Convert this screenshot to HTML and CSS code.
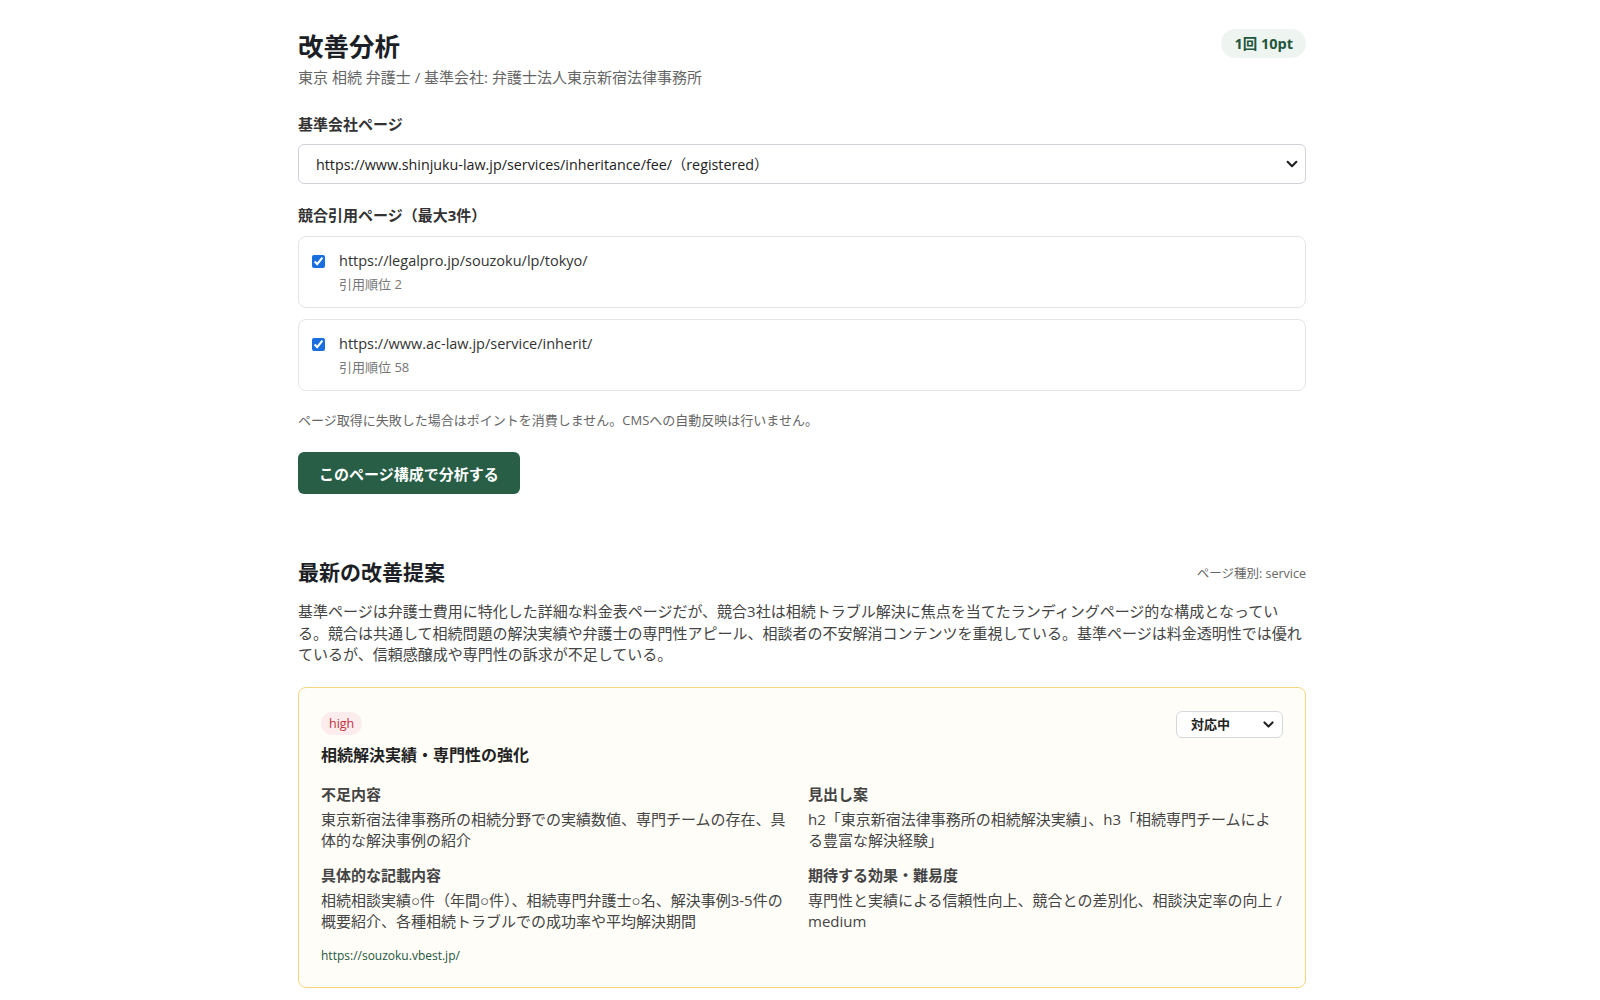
FILE: index.html
```html
<!DOCTYPE html>
<html lang="ja">
<head>
  <meta charset="UTF-8">
  <meta name="viewport" content="width=device-width, initial-scale=1.0">
  <title>改善分析</title>
  <link rel="stylesheet" href="styles.css">
</head>
<body>
  <div class="page">
    <div class="page-header">
      <div>
        <h1 class="page-title">改善分析</h1>
        <div class="page-sub">東京 相続 弁護士 / 基準会社: 弁護士法人東京新宿法律事務所</div>
      </div>
      <span class="cost-badge">1回 10pt</span>
    </div>

    <div class="field">
      <div class="field-label">基準会社ページ</div>
      <div class="select-wrap">
        <select class="select">
          <option>https://www.shinjuku-law.jp/services/inheritance/fee/（registered）</option>
        </select>
        <svg class="select-arrow" width="14" height="14" viewBox="0 0 16 16"><path d="M3 5.5l5 5 5-5" fill="none" stroke="#222" stroke-width="2.4" stroke-linecap="round" stroke-linejoin="round"/></svg>
      </div>
    </div>

    <div class="field field-comp">
      <div class="field-label">競合引用ページ（最大3件）</div>
      <div class="competitors">
        <label class="comp-card">
          <input type="checkbox" class="comp-check" checked>
          <div>
            <div class="comp-url">https://legalpro.jp/souzoku/lp/tokyo/</div>
            <div class="comp-rank">引用順位 2</div>
          </div>
        </label>
        <label class="comp-card">
          <input type="checkbox" class="comp-check" checked>
          <div>
            <div class="comp-url">https://www.ac-law.jp/service/inherit/</div>
            <div class="comp-rank">引用順位 58</div>
          </div>
        </label>
      </div>
    </div>

    <p class="note">ページ取得に失敗した場合はポイントを消費しません。CMSへの自動反映は行いません。</p>
    <button class="run-btn">このページ構成で分析する</button>

    <div class="result">
      <div class="result-head">
        <h2 class="result-title">最新の改善提案</h2>
        <span class="page-type">ページ種別: service</span>
      </div>
      <p class="summary">基準ページは弁護士費用に特化した詳細な料金表ページだが、競合3社は相続トラブル解決に焦点を当てたランディングページ的な構成となっている。競合は共通して相続問題の解決実績や弁護士の専門性アピール、相談者の不安解消コンテンツを重視している。基準ページは料金透明性では優れているが、信頼感醸成や専門性の訴求が不足している。</p>

      <div class="suggestion">
        <div class="sug-top">
          <div>
            <span class="priority">high</span>
            <div class="sug-title">相続解決実績・専門性の強化</div>
          </div>
          <div class="status-wrap">
            <select class="status-select">
              <option>対応中</option>
            </select>
            <svg class="status-arrow" width="13" height="13" viewBox="0 0 16 16"><path d="M3 5.5l5 5 5-5" fill="none" stroke="#222" stroke-width="2.6" stroke-linecap="round" stroke-linejoin="round"/></svg>
          </div>
        </div>
        <div class="sug-grid">
          <div class="sug-item">
            <div class="sug-label">不足内容</div>
            <div class="sug-text">東京新宿法律事務所の相続分野での実績数値、専門チームの存在、具体的な解決事例の紹介</div>
          </div>
          <div class="sug-item">
            <div class="sug-label">見出し案</div>
            <div class="sug-text">h2「東京新宿法律事務所の相続解決実績」、h3「相続専門チームによる豊富な解決経験」</div>
          </div>
          <div class="sug-item">
            <div class="sug-label">具体的な記載内容</div>
            <div class="sug-text">相続相談実績○件（年間○件）、相続専門弁護士○名、解決事例3-5件の概要紹介、各種相続トラブルでの成功率や平均解決期間</div>
          </div>
          <div class="sug-item">
            <div class="sug-label">期待する効果・難易度</div>
            <div class="sug-text">専門性と実績による信頼性向上、競合との差別化、相談決定率の向上 / medium</div>
          </div>
        </div>
        <a href="#" class="sug-link">https://souzoku.vbest.jp/</a>
      </div>
    </div>
  </div>
</body>
</html>
```

FILE: styles.css
```css
* {
  margin: 0;
  padding: 0;
  box-sizing: border-box;
}

body {
  font-family: "Open Sans", "Liberation Sans", "Noto Sans CJK JP", sans-serif;
  background: #fff;
  color: #222;
  padding-left: 4px;
}

.page {
  width: 1008px;
  margin: 0 auto;
  padding-top: 28px;
}

.page-header {
  display: flex;
  justify-content: space-between;
  align-items: flex-start;
}

.page-title {
  font-size: 25.5px;
  font-weight: 700;
  color: #1c1f26;
  line-height: 36px;
}

.page-sub {
  font-size: 15px;
  line-height: 21px;
  color: #666;
  margin-top: 3px;
}

.cost-badge {
  margin-top: 1px;
  background: #eef5f0;
  color: #23563d;
  font-size: 14.5px;
  line-height: 19px;
  font-weight: 700;
  padding: 5px 13px;
  border-radius: 15px;
}

.field {
  margin-top: 26px;
}

.field-comp {
  margin-top: 21px;
}

.field-label {
  font-size: 15px;
  line-height: 21px;
  font-weight: 700;
  color: #333;
  margin-bottom: 9px;
}

.field-comp .field-label {
  margin-bottom: 10px;
}

.select-wrap {
  position: relative;
}

.select {
  width: 100%;
  height: 40px;
  appearance: none;
  border: 1px solid #cfd3d8;
  border-radius: 6px;
  background: #fff;
  padding: 0 36px 0 17px;
  font-family: inherit;
  font-size: 14.3px;
  color: #222;
}

.select-arrow {
  position: absolute;
  right: 7px;
  top: 13px;
  pointer-events: none;
}

.competitors {
  display: flex;
  flex-direction: column;
  gap: 11px;
}

.comp-card {
  display: flex;
  align-items: flex-start;
  gap: 14px;
  border: 1px solid #e3e5e8;
  border-radius: 8px;
  padding: 14px 13px 13px;
  height: 72px;
}

.comp-check {
  width: 13px;
  height: 13px;
  margin-top: 4px;
  accent-color: #1a6fe0;
}

.comp-url {
  font-size: 14.5px;
  color: #333;
  line-height: 20px;
}

.comp-rank {
  font-size: 13px;
  line-height: 18px;
  color: #777;
  margin-top: 4px;
}

.note {
  font-size: 13px;
  line-height: 18px;
  color: #666;
  margin-top: 20px;
}

.run-btn {
  margin-top: 23px;
  background: #275e45;
  color: #fff;
  border: none;
  border-radius: 6px;
  font-family: inherit;
  font-size: 15px;
  font-weight: 700;
  height: 42px;
  padding: 0 21px;
  cursor: pointer;
}

.result {
  margin-top: 63px;
}

.result-head {
  display: flex;
  justify-content: space-between;
  align-items: center;
}

.result-title {
  font-size: 21px;
  line-height: 30px;
  font-weight: 700;
  color: #1c1f26;
}

.page-type {
  font-size: 12.5px;
  color: #666;
}

.summary {
  margin-top: 14px;
  font-size: 15px;
  line-height: 21.5px;
  color: #444;
}

.suggestion {
  margin-top: 21px;
  border: 1px solid #f6d77e;
  background: #fffdf8;
  border-radius: 8px;
  padding: 23px 22px 22px;
}

.sug-top {
  display: flex;
  justify-content: space-between;
  align-items: flex-start;
}

.priority {
  display: inline-block;
  background: #fdecee;
  color: #c0303a;
  font-size: 12.5px;
  line-height: 17px;
  padding: 3px 8px;
  border-radius: 12px;
}

.sug-title {
  margin-top: 9px;
  font-size: 16px;
  line-height: 22px;
  font-weight: 700;
  color: #222;
}

.status-wrap {
  position: relative;
}

.status-select {
  appearance: none;
  width: 107px;
  height: 27px;
  border: 1px solid #d5d8dc;
  border-radius: 6px;
  background: #fff;
  padding: 0 26px 0 14px;
  font-family: inherit;
  font-size: 13px;
  font-weight: 700;
  color: #222;
}

.status-arrow {
  position: absolute;
  right: 8px;
  top: 7px;
  pointer-events: none;
}

.sug-grid {
  display: grid;
  grid-template-columns: 1fr 1fr;
  column-gap: 12px;
  row-gap: 13px;
  margin-top: 18px;
}

.sug-label {
  font-size: 15px;
  line-height: 21px;
  font-weight: 700;
  color: #444;
  margin-bottom: 4px;
}

.sug-text {
  font-size: 15px;
  line-height: 21.5px;
  color: #444;
}

.sug-link {
  display: inline-block;
  margin-top: 14px;
  font-size: 12px;
  line-height: 18px;
  color: #23563d;
  text-decoration: none;
}
```
